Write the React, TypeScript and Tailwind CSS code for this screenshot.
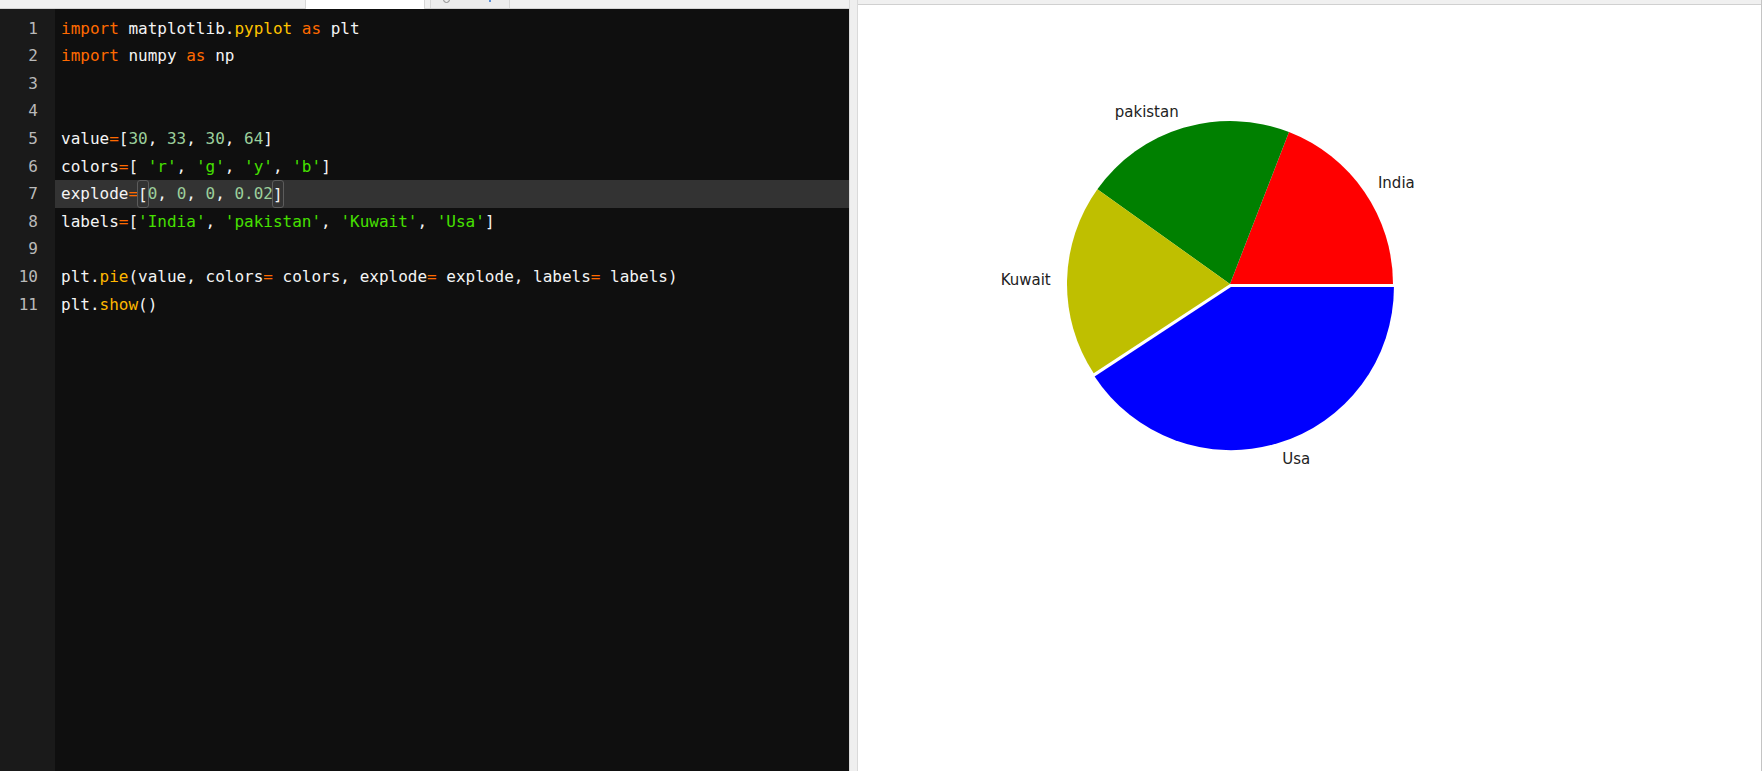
import React from "react";

type Tok = [string, string];

const KW = "#ff6a00";
const TX = "#f4f4f4";
const YL = "#ffc400";
const NM = "#9ccf9c";
const ST = "#46e000";
const FN = "#ffb700";

const lines: Tok[][] = [
  [["import", KW], [" matplotlib.", TX], ["pyplot", YL], [" ", TX], ["as", KW], [" plt", TX]],
  [["import", KW], [" numpy ", TX], ["as", KW], [" np", TX]],
  [],
  [],
  [["value", TX], ["=", KW], ["[", TX], ["30", NM], [", ", TX], ["33", NM], [", ", TX], ["30", NM], [", ", TX], ["64", NM], ["]", TX]],
  [["colors", TX], ["=", KW], ["[ ", TX], ["'r'", ST], [", ", TX], ["'g'", ST], [", ", TX], ["'y'", ST], [", ", TX], ["'b'", ST], ["]", TX]],
  [["explode", TX], ["=", KW], ["[[", TX], ["0", NM], [", ", TX], ["0", NM], [", ", TX], ["0", NM], [", ", TX], ["0.02", NM], ["]]", TX]],
  [["labels", TX], ["=", KW], ["[", TX], ["'India'", ST], [", ", TX], ["'pakistan'", ST], [", ", TX], ["'Kuwait'", ST], [", ", TX], ["'Usa'", ST], ["]", TX]],
  [],
  [["plt.", TX], ["pie", FN], ["(value, colors", TX], ["=", KW], [" colors, explode", TX], ["=", KW], [" explode, labels", TX], ["=", KW], [" labels)", TX]],
  [["plt.", TX], ["show", FN], ["()", TX]],
];

const CodeLine = ({ toks, active }: { toks: Tok[]; active: boolean }) => (
  <div className={`h-[27.6px] leading-[27.6px] pl-[6px] whitespace-pre ${active ? "bg-[#333333]" : ""}`}>
    {toks.map((t, i) => {
      if (t[0] === "[[" || t[0] === "]]") {
        return (
          <span key={i} className="inline-block align-top h-[27.6px] rounded-[3px] border border-[#5c5c5c] -mx-[1px]" style={{ color: t[1] }}>
            {t[0][0]}
          </span>
        );
      }
      return (
        <span key={i} style={{ color: t[1] }}>
          {t[0]}
        </span>
      );
    })}
    {toks.length === 0 ? " " : null}
  </div>
);

const values = [30, 33, 30, 64];
const colors = ["#ff0000", "#008000", "#bfbf00", "#0000ff"];
const explode = [0, 0, 0, 0.02];
const labels = ["India", "pakistan", "Kuwait", "Usa"];

const PieChart = () => {
  const cx = 372;
  const cy = 279;
  const r = 163;
  const total = values.reduce((a, b) => a + b, 0);
  let start = 0;
  const wedges = values.map((v, i) => {
    const span = (v / total) * 360;
    const t1 = start;
    const t2 = start + span;
    start = t2;
    const mid = ((t1 + t2) / 2) * (Math.PI / 180);
    const ox = cx + explode[i] * r * Math.cos(mid);
    const oy = cy - explode[i] * r * Math.sin(mid);
    const a1 = (t1 * Math.PI) / 180;
    const a2 = (t2 * Math.PI) / 180;
    const x1 = ox + r * Math.cos(a1);
    const y1 = oy - r * Math.sin(a1);
    const x2 = ox + r * Math.cos(a2);
    const y2 = oy - r * Math.sin(a2);
    const large = span > 180 ? 1 : 0;
    const d = `M ${ox} ${oy} L ${x1} ${y1} A ${r} ${r} 0 ${large} 0 ${x2} ${y2} Z`;
    const lx = ox + 1.1 * r * Math.cos(mid);
    const ly = oy - 1.1 * r * Math.sin(mid);
    return { d, lx, ly, anchor: Math.cos(mid) > 0 ? "start" : "end", color: colors[i], label: labels[i] };
  });
  return (
    <svg width="903" height="765" className="block">
      {wedges.map((w, i) => (
        <path key={i} d={w.d} fill={w.color} />
      ))}
      {wedges.map((w, i) => (
        <text
          key={"t" + i}
          x={w.lx}
          y={w.ly}
          textAnchor={w.anchor as "start" | "end"}
          dominantBaseline="central"
          fontFamily="'DejaVu Sans', sans-serif"
          fontSize="15"
          fill="#222222"
        >
          {w.label}
        </text>
      ))}
    </svg>
  );
};

export default function App() {
  return (
    <div className="w-[1762px] h-[771px] flex bg-white overflow-hidden">
      {/* editor column */}
      <div className="w-[849px] h-full flex flex-col">
        <div className="relative h-[9px] bg-[#f0f0f0] border-b border-[#d2d2d2]">
          <div className="absolute left-[305px] top-0 w-[120px] h-[9px] bg-white border-x border-[#d6d6d6]" />
          <div className="absolute left-[430px] top-0 w-[80px] h-[8px] bg-[#ececec] border-x border-[#d6d6d6]">
            <div className="absolute left-[12px] -top-[4px] w-[7px] h-[7px] rounded-full border border-[#8a8a8a]" />
            <div className="absolute left-[58px] top-0 w-[2px] h-[2px] bg-[#5b8fd6]" />
          </div>
        </div>
        <div className="flex-1 flex font-['DejaVu_Sans_Mono',monospace] text-[16px]">
          <div className="w-[55px] bg-[#1a1a1a] pt-[5.6px] pr-[17px] text-right text-[#b9b9b9]">
            {lines.map((_, i) => (
              <div key={i} className="h-[27.6px] leading-[27.6px]">
                {i + 1}
              </div>
            ))}
          </div>
          <div className="flex-1 bg-[#0f0f0f] pt-[5.6px]">
            {lines.map((l, i) => (
              <CodeLine key={i} toks={l} active={i === 6} />
            ))}
          </div>
        </div>
      </div>
      {/* splitter */}
      <div className="w-[9px] h-full bg-[#efefef] border-l border-[#dadada] border-r border-[#c6c6c6]" />
      {/* output panel */}
      <div className="flex-1 h-full flex flex-col border-r border-[#c4c4c4]">
        <div className="h-[5px] bg-[#f0f0f0] border-b border-[#d0d0d0]" />
        <div className="flex-1 bg-white">
          <PieChart />
        </div>
      </div>
    </div>
  );
}
